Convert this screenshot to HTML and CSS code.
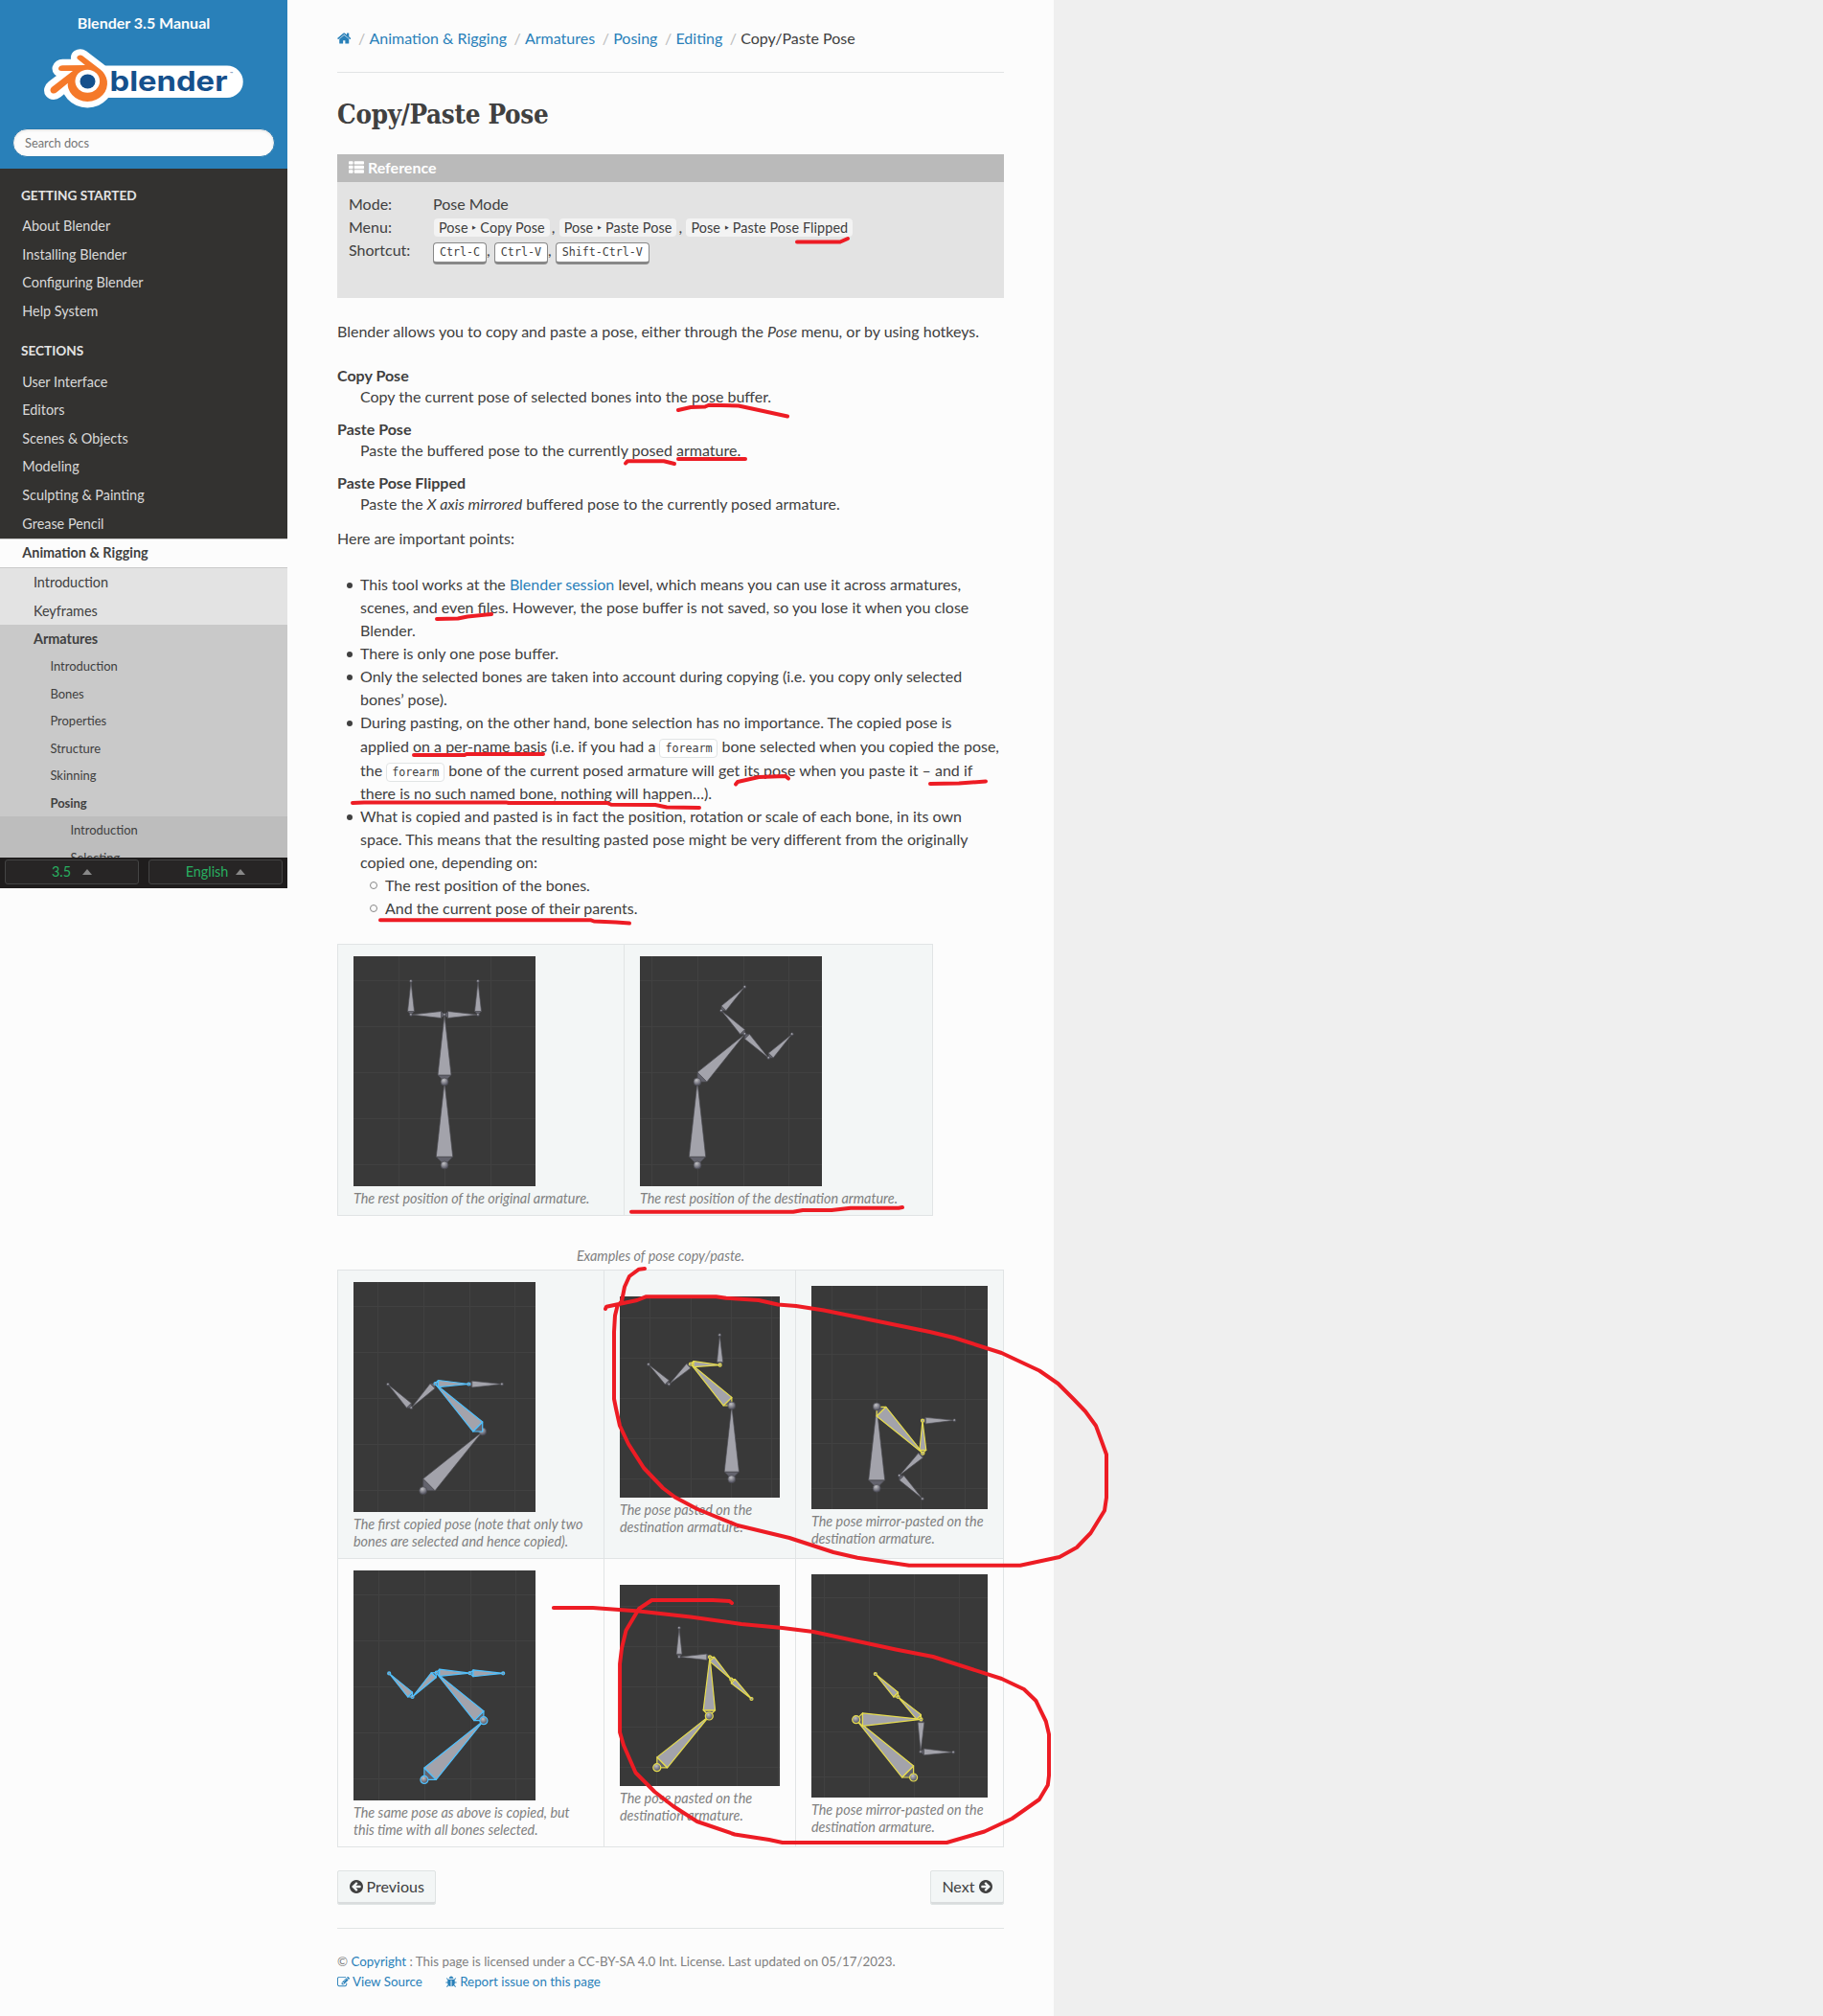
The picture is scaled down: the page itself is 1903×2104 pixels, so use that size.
FILE: index.html
```html
<!DOCTYPE html>
<html lang="en">
<head>
<meta charset="utf-8">
<title>Copy/Paste Pose — Blender Manual</title>
<link rel="stylesheet" href="styles.css">
</head>
<body>
<svg class="defs" width="0" height="0" aria-hidden="true">
  <defs>
    <!-- unit bone: head at the origin, tip at 1,0 -->
    <g id="bone">
      <path class="bone-base" d="M0 0L.1-.1V.1Z"/>
      <path class="bone-body" d="M.1-.1L1 0L.1.1Z"/>
    </g>
    <radialGradient id="ball" cx=".4" cy=".3" r=".7"><stop offset="0" stop-color="#c0c0c4"/><stop offset="1" stop-color="#4e4e5c"/></radialGradient>
    <circle id="joint" class="joint" r="4"/>
    <circle id="dot" class="joint" r="1.500"/>
    <symbol id="i-home" viewBox="64 0 1664 1792"><path d="M1472 992v480q0 26-19 45t-45 19h-384v-384h-256v384h-384q-26 0-45-19t-19-45v-480q0-1 .5-3t.5-3l575-474 575 474q1 2 1 6zm223-69l-62 74q-8 9-21 11h-3q-13 0-21-7l-692-577-692 577q-12 8-24 7-13-2-21-11l-62-74q-8-10-7-23.5t11-21.5l719-599q32-26 76-26t76 26l244 204v-195q0-14 9-23t23-9h192q14 0 23 9t9 23v408l219 182q10 8 11 21.5t-7 23.5z"/></symbol>
    <symbol id="i-list" viewBox="0 0 1792 1792"><path d="M512 1248v192q0 40-28 68t-68 28h-320q-40 0-68-28t-28-68v-192q0-40 28-68t68-28h320q40 0 68 28t28 68zm0-512v192q0 40-28 68t-68 28h-320q-40 0-68-28t-28-68v-192q0-40 28-68t68-28h320q40 0 68 28t28 68zm1280 512v192q0 40-28 68t-68 28h-960q-40 0-68-28t-28-68v-192q0-40 28-68t68-28h960q40 0 68 28t28 68zm-1280-1024v192q0 40-28 68t-68 28h-320q-40 0-68-28t-28-68v-192q0-40 28-68t68-28h320q40 0 68 28t28 68zm1280 512v192q0 40-28 68t-68 28h-960q-40 0-68-28t-28-68v-192q0-40 28-68t68-28h960q40 0 68 28t28 68zm0-512v192q0 40-28 68t-68 28h-960q-40 0-68-28t-28-68v-192q0-40 28-68t68-28h960q40 0 68 28t28 68z"/></symbol>
    <symbol id="i-arrow" viewBox="128 128 1536 1536"><path d="M1408 960v-128q0-26-19-45t-45-19h-502l189-189q19-19 19-45t-19-45l-91-91q-18-18-45-18t-45 18l-362 362-91 91q-18 18-18 45t18 45l91 91 362 362q18 18 45 18t45-18l91-91q18-18 18-45t-18-45l-189-189h502q26 0 45-19t19-45zm256-64q0 209-103 385.5t-279.5 279.5-385.5 103-385.5-103-279.5-279.5-103-385.5 103-385.5 279.5-279.5 385.5-103 385.5 103 279.5 279.5 103 385.5z"/></symbol>
    <symbol id="i-edit" viewBox="0 0 1792 1792"><path d="M888 1184l116-116-152-152-116 116v56h96v96h56zm440-720q-16-16-33 1l-350 350q-17 17-1 33t33-1l350-350q17-17 1-33zm80 594v190q0 119-84.5 203.5t-203.5 84.5h-832q-119 0-203.5-84.5t-84.5-203.5v-832q0-119 84.5-203.5t203.5-84.5h832q63 0 117 25 15 7 18 23 3 17-9 29l-49 49q-14 14-32 8-23-6-45-6h-832q-66 0-113 47t-47 113v832q0 66 47 113t113 47h832q66 0 113-47t47-113v-126q0-13 9-22l64-64q15-15 35-7t20 29zm-96-738l288 288-672 672h-288v-288zm444 132l-92 92-288-288 92-92q28-28 68-28t68 28l152 152q28 28 28 68t-28 68z"/></symbol>
    <symbol id="i-bug" viewBox="96 0 1600 1792"><path d="M1696 960q0 26-19 45t-45 19h-224q0 171-67 290l208 209q19 19 19 45t-19 45q-18 19-45 19t-45-19l-198-197q-5 5-15 13t-42 28.500-65 36.500-82 29-97 13v-896h-128v896q-51 0-101.500-13.500t-87-33-66-39-43.500-32.500l-15-14-183 207q-20 21-48 21-24 0-43-16-19-18-20.500-44.500t15.500-46.500l202-227q-58-114-58-274h-224q-26 0-45-19t-19-45 19-45 45-19h224v-294l-173-173q-19-19-19-45t19-45 45-19 45 19l173 173h844l173-173q19-19 45-19t45 19 19 45-19 45l-173 173v294h224q26 0 45 19t19 45zm-480-576h-640q0-133 93.500-226.500t226.500-93.500 226.500 93.500 93.500 226.500z"/></symbol>
  </defs>
</svg>

<div class="page">
  <nav class="sidebar">
    <div class="brand">
      <a class="brand-title">Blender 3.5 Manual</a>
      <svg class="logo" viewBox="46 51 209 62" width="209" height="62">
        <g fill="#fff" stroke="#fff" stroke-linejoin="round">
          <path stroke="none" d="M95 68.500H237a16.700 16.700 0 0 1 0 33.500H95Z"/>
          <path stroke-width="5.200" transform="translate(52.500 52) scale(2.480)" d="M7.350 14.831c.006.314.106.922.256 1.398a7.372 7.372 0 0 0 1.593 2.757 8.227 8.227 0 0 0 2.787 2.001 8.947 8.947 0 0 0 3.660.760 8.964 8.964 0 0 0 3.657-.772 8.285 8.285 0 0 0 2.785-2.010 7.428 7.428 0 0 0 1.592-2.762 6.964 6.964 0 0 0 .250-3.074 7.123 7.123 0 0 0-1.016-2.779 7.764 7.764 0 0 0-1.852-2.043L13.566 2.550l-.020-.015c-.492-.378-1.319-.376-1.860.002-.547.382-.609 1.015-.123 1.415l3.126 2.544-9.530.010h-.013c-.788.001-1.545.518-1.695 1.172-.154.665.380 1.217 1.200 1.220l4.830-.010-8.620 6.619-.034.025c-.813.622-1.075 1.658-.563 2.313.520.667 1.625.668 2.447.004L7.414 14s-.069.520-.063.831z"/>
        </g>
        <path fill="#f5792a" transform="translate(52.500 52) scale(2.480)" d="M7.350 14.831c.006.314.106.922.256 1.398a7.372 7.372 0 0 0 1.593 2.757 8.227 8.227 0 0 0 2.787 2.001 8.947 8.947 0 0 0 3.660.760 8.964 8.964 0 0 0 3.657-.772 8.285 8.285 0 0 0 2.785-2.010 7.428 7.428 0 0 0 1.592-2.762 6.964 6.964 0 0 0 .250-3.074 7.123 7.123 0 0 0-1.016-2.779 7.764 7.764 0 0 0-1.852-2.043L13.566 2.550l-.020-.015c-.492-.378-1.319-.376-1.860.002-.547.382-.609 1.015-.123 1.415l3.126 2.544-9.530.010h-.013c-.788.001-1.545.518-1.695 1.172-.154.665.380 1.217 1.200 1.220l4.830-.010-8.620 6.619-.034.025c-.813.622-1.075 1.658-.563 2.313.520.667 1.625.668 2.447.004L7.414 14s-.069.520-.063.831z"/>
        <ellipse cx="91.300" cy="84.800" rx="12.800" ry="12" fill="#fff"/>
        <ellipse cx="91.500" cy="84.900" rx="8" ry="7.500" fill="#15508c"/>
        <text class="logo-word" x="114.500" y="95" textLength="123" lengthAdjust="spacingAndGlyphs">blender</text>
        <text class="logo-tm" x="240" y="79">™</text>
      </svg>
      <div class="search">Search docs</div>
    </div>
    <div class="menu">
      <p class="menu-caption">Getting Started</p>
      <ul>
        <li><a>About Blender</a></li>
        <li><a>Installing Blender</a></li>
        <li><a>Configuring Blender</a></li>
        <li><a>Help System</a></li>
      </ul>
      <p class="menu-caption second">Sections</p>
      <ul>
        <li><a>User Interface</a></li>
        <li><a>Editors</a></li>
        <li><a>Scenes &amp; Objects</a></li>
        <li><a>Modeling</a></li>
        <li><a>Sculpting &amp; Painting</a></li>
        <li><a>Grease Pencil</a></li>
        <li class="current"><a>Animation &amp; Rigging</a>
          <ul class="l2">
            <li><a>Introduction</a></li>
            <li><a>Keyframes</a></li>
            <li class="open"><a>Armatures</a>
              <ul class="l3">
                <li><a>Introduction</a></li>
                <li><a>Bones</a></li>
                <li><a>Properties</a></li>
                <li><a>Structure</a></li>
                <li><a>Skinning</a></li>
                <li class="open"><a>Posing</a>
                  <ul class="l4">
                    <li><a>Introduction</a></li>
                    <li><a>Selecting</a></li>
                  </ul>
                </li>
              </ul>
            </li>
          </ul>
        </li>
      </ul>
    </div>
    <div class="versions">
      <div class="version-btn">3.5<span class="caret"></span></div>
      <div class="version-btn version-lang">English<span class="caret"></span></div>
    </div>
  </nav>

  <main class="content">
    <div class="crumbs">
      <a><svg class="icon home"><use href="#i-home"/></svg></a><i>/</i><a>Animation &amp; Rigging</a><i>/</i><a>Armatures</a><i>/</i><a>Posing</a><i>/</i><a>Editing</a><i>/</i><span>Copy/Paste Pose</span>
    </div>
    <hr>
    <h1>Copy/Paste Pose</h1>

    <section class="ref">
      <p class="ref-title"><svg class="icon"><use href="#i-list"/></svg> Reference</p>
      <dl class="ref-body">
        <dt>Mode:</dt><dd>Pose Mode</dd>
        <dt>Menu:</dt><dd><span class="menusel">Pose ‣ Copy Pose</span>,<span class="menusel">Pose ‣ Paste Pose</span>,<span class="menusel">Pose ‣ Paste Pose Flipped</span></dd>
        <dt>Shortcut:</dt><dd><kbd>Ctrl-C</kbd>, <kbd>Ctrl-V</kbd>, <kbd>Shift-Ctrl-V</kbd></dd>
      </dl>
    </section>

    <p class="intro">Blender allows you to copy and paste a pose, either through the <em>Pose</em> menu, or by using hotkeys.</p>

    <dl class="terms">
      <dt>Copy Pose</dt><dd>Copy the current pose of selected bones into the pose buffer.</dd>
      <dt>Paste Pose</dt><dd>Paste the buffered pose to the currently posed armature.</dd>
      <dt>Paste Pose Flipped</dt><dd>Paste the <em>X axis mirrored</em> buffered pose to the currently posed armature.</dd>
    </dl>

    <p class="points-lead">Here are important points:</p>
    <ul class="points">
      <li>This tool works at the <a>Blender session</a> level, which means you can use it across armatures,<br>scenes, and even files. However, the pose buffer is not saved, so you lose it when you close<br>Blender.</li>
      <li>There is only one pose buffer.</li>
      <li>Only the selected bones are taken into account during copying (i.e. you copy only selected<br>bones’ pose).</li>
      <li>During pasting, on the other hand, bone selection has no importance. The copied pose is
        <div class="code-line">applied on a per-name basis (i.e. if you had a <code>forearm</code> bone selected when you copied the pose,</div>
        <div class="code-line">the <code>forearm</code> bone of the current posed armature will get its pose when you paste it – and if</div>
        there is no such named bone, nothing will happen…).</li>
      <li>What is copied and pasted is in fact the position, rotation or scale of each bone, in its own<br>space. This means that the resulting pasted pose might be very different from the originally<br>copied one, depending on:
        <ul>
          <li>The rest position of the bones.</li>
          <li>And the current pose of their parents.</li>
        </ul>
      </li>
    </ul>

    <table class="figs figs-rest">
      <tr>
        <td><figure>
          <svg width="190" height="240">
            <path class="grid" d="M47.500 0V240M95.500 0V240M143.500 0V240M0 25.500H190M0 73.500H190M0 121.500H190M0 169.500H190M0 217.500H190"/>
            <use href="#bone" transform="matrix(0 -87 87 0 95 218)"/><use href="#bone" transform="matrix(0 -70 70 0 95 131)"/>
            <use href="#bone" transform="matrix(-35 0 0 -35 95 61)"/><use href="#bone" transform="matrix(35 0 0 35 95 61)"/>
            <use href="#bone" transform="matrix(0 -35 35 0 60 61)"/><use href="#bone" transform="matrix(0 -35 35 0 130 61)"/>
            <use href="#joint" x="95" y="218"/><use href="#joint" x="95" y="131"/><use href="#dot" x="95" y="61"/><use href="#dot" x="60" y="61"/><use href="#dot" x="130" y="61"/><use href="#dot" x="60" y="26"/><use href="#dot" x="130" y="26"/>
          </svg>
          <figcaption>The rest position of the original armature.</figcaption>
        </figure></td>
        <td><figure>
          <svg width="190" height="240">
            <path class="grid" d="M12.500 0V240M60.500 0V240M108.500 0V240M155.500 0V240M0 25.500H190M0 73.500H190M0 121.500H190M0 169.500H190M0 217.500H190"/>
            <use href="#bone" transform="matrix(0 -87 87 0 60 218)"/><use href="#bone" transform="matrix(49.400 -49.500 49.500 49.400 60 131)"/>
            <use href="#bone" transform="matrix(-24.400 -24.600 24.600 -24.400 109.400 81.300)"/><use href="#bone" transform="matrix(25 25 -25 25 109.400 81.300)"/>
            <use href="#bone" transform="matrix(24.400 -24.700 24.700 24.400 85 56.700)"/><use href="#bone" transform="matrix(24.500 -24.700 24.700 24.500 134.300 106)"/>
            <use href="#joint" x="60" y="218"/><use href="#joint" x="60" y="131"/><use href="#dot" x="109.400" y="81"/><use href="#dot" x="85" y="56.700"/><use href="#dot" x="134.300" y="106"/><use href="#dot" x="109.400" y="32"/><use href="#dot" x="158.800" y="81.300"/>
          </svg>
          <figcaption>The rest position of the destination armature.</figcaption>
        </figure></td>
      </tr>
    </table>

    <table class="figs figs-examples">
      <caption>Examples of pose copy/paste.</caption>
      <tr class="odd">
        <td><figure>
          <svg width="190" height="240">
            <path class="grid" d="M25.500 0V240M73.500 0V240M121.500 0V240M168.500 0V240M0 25.500H190M0 73.500H190M0 121.500H190M0 169.500H190M0 217.500H190"/>
            <use href="#bone" transform="matrix(62 -61.700 61.700 62 72.700 217.700)"/>
            <use href="#bone" transform="matrix(34.700 0 0 34.700 120.300 106.600)"/><use href="#bone" transform="matrix(-24.700 25.300 -25.300 -24.700 85 106)"/><use href="#bone" transform="matrix(-24.300 -24.600 24.600 -24.300 60.300 131.300)"/>
            <use href="#joint" x="72.700" y="217.700"/><use href="#joint" x="134.700" y="156"/><use href="#dot" x="36" y="106.700"/><use href="#dot" x="60.300" y="131.300"/><use href="#dot" x="155" y="106.600"/>
            <g class="sel"><use href="#bone" transform="matrix(-49.700 -50 50 -49.700 134.700 156)"/><use href="#bone" transform="matrix(35.300 .5 -.5 35.300 85 106)"/><use href="#dot" x="85.500" y="106"/><use href="#dot" x="120.300" y="106.500"/></g>
          </svg>
          <figcaption>The first copied pose (note that only two<br>bones are selected and hence copied).</figcaption>
        </figure></td>
        <td><figure>
          <svg width="167" height="210">
            <path class="grid" d="M31.500 0V210M74.500 0V210M116.500 0V210M158.500 0V210M0 22.500H167M0 64.500H167M0 106.500H167M0 148.500H167M0 190.500H167"/>
            <use href="#bone" transform="matrix(0 -76.700 76.700 0 116.800 190.700)"/>
            <use href="#bone" transform="matrix(-.3 -31.400 31.400 -.3 104.600 71.700)"/><use href="#bone" transform="matrix(-22.600 21.200 -21.200 -22.600 74 70.500)"/><use href="#bone" transform="matrix(-21.400 -20.700 20.700 -21.400 51.400 91.700)"/>
            <g class="pasted"><use href="#bone" transform="matrix(-42.800 -43.700 43.700 -42.800 116.800 114)"/><use href="#bone" transform="matrix(30.600 1.200 -1.200 30.600 74 70.500)"/><use href="#dot" x="74" y="70.500"/><use href="#dot" x="104.600" y="71.700"/></g>
            <use href="#joint" x="116.800" y="190.700"/><use href="#joint" x="116.800" y="114"/><use href="#dot" x="104.300" y="40.300"/><use href="#dot" x="51.400" y="91.700"/><use href="#dot" x="30" y="71"/>
          </svg>
          <figcaption>The pose pasted on the<br>destination armature.</figcaption>
        </figure></td>
        <td><figure>
          <svg width="184" height="233">
            <path class="grid" d="M21.500 0V233M68.500 0V233M114.500 0V233M160.500 0V233M0 24.500H184M0 71.500H184M0 118.500H184M0 164.500H184M0 211.500H184"/>
            <use href="#bone" transform="matrix(0 -85 85 0 68.200 211.300)"/>
            <use href="#bone" transform="matrix(33.300 -.4 .4 33.300 116 140.700)"/><use href="#bone" transform="matrix(-24.600 23.300 -23.300 -24.600 116.400 174.700)"/><use href="#bone" transform="matrix(24.200 24.300 -24.300 24.200 91.800 198)"/>
            <g class="pasted dark"><use href="#bone" transform="matrix(48.200 48.400 -48.400 48.200 68.200 126.300)"/><use href="#bone" transform="matrix(-.4 -34 34 -.4 116.400 174.700)"/><use href="#dot" x="116.400" y="174.700"/><use href="#dot" x="116" y="140.700"/></g>
            <use href="#joint" x="68.200" y="211.300"/><use href="#joint" x="68.200" y="126"/><use href="#dot" x="149.300" y="140.300"/><use href="#dot" x="91.800" y="198"/><use href="#dot" x="116" y="222.300"/>
          </svg>
          <figcaption>The pose mirror-pasted on the<br>destination armature.</figcaption>
        </figure></td>
      </tr>
      <tr>
        <td><figure>
          <svg width="190" height="240">
            <path class="grid" d="M26.500 0V240M74.500 0V240M122.500 0V240M169.500 0V240M0 25.500H190M0 73.500H190M0 121.500H190M0 169.500H190M0 217.500H190"/>
            <g class="sel" transform="translate(1.200 .7)"><use href="#bone" transform="matrix(62 -61.700 61.700 62 72.700 217.700)"/><use href="#bone" transform="matrix(-49.700 -50 50 -49.700 134.700 156)"/><use href="#bone" transform="matrix(35.300 .5 -.5 35.300 85 106)"/><use href="#bone" transform="matrix(34.700 0 0 34.700 120.300 106.600)"/><use href="#bone" transform="matrix(-24.700 25.300 -25.300 -24.700 85 106)"/><use href="#bone" transform="matrix(-24.300 -24.600 24.600 -24.300 60.300 131.300)"/>
            <use href="#joint" x="72.700" y="217.700"/><use href="#joint" x="134.700" y="156"/><use href="#dot" x="85.500" y="106"/><use href="#dot" x="120.300" y="106.500"/><use href="#dot" x="36" y="106.700"/><use href="#dot" x="60.300" y="131.300"/><use href="#dot" x="155" y="106.600"/></g>
          </svg>
          <figcaption>The same pose as above is copied, but<br>this time with all bones selected.</figcaption>
        </figure></td>
        <td><figure>
          <svg width="167" height="210">
            <path class="grid" d="M38.500 0V210M81.500 0V210M122.500 0V210M165.500 0V210M0 22.500H167M0 64.500H167M0 106.500H167M0 148.500H167M0 190.500H167"/>
            <use href="#bone" transform="matrix(-32 0 0 -32 94 75.300)"/><use href="#bone" transform="matrix(0 -30.300 30.300 0 62 75.300)"/><use href="#dot" x="62" y="75.300"/><use href="#dot" x="62" y="45"/>
            <g class="pasted"><use href="#bone" transform="matrix(54.500 -53.700 53.700 54.500 38.800 190.700)"/><use href="#bone" transform="matrix(.7 -61.700 61.700 .7 93.300 137)"/><use href="#bone" transform="matrix(22.300 23.400 -23.400 22.300 94 75.300)"/><use href="#bone" transform="matrix(21.200 20.300 -20.300 21.200 116.300 98.700)"/>
            <use href="#joint" x="38.800" y="190.700"/><use href="#joint" x="93.300" y="137"/><use href="#dot" x="94" y="75.300"/><use href="#dot" x="116.300" y="98.700"/><use href="#dot" x="137.500" y="119"/></g>
          </svg>
          <figcaption>The pose pasted on the<br>destination armature.</figcaption>
        </figure></td>
        <td><figure>
          <svg width="184" height="233">
            <path class="grid" d="M13.500 0V233M60.500 0V233M107.500 0V233M154.500 0V233M0 24.500H184M0 71.500H184M0 118.500H184M0 164.500H184M0 211.500H184"/>
            <use href="#bone" transform="matrix(-.4 34 -34 -.4 114.500 151.300)"/><use href="#bone" transform="matrix(34.100 .4 -.4 34.100 114.100 185.300)"/><use href="#dot" x="114.100" y="185.300"/><use href="#dot" x="148.200" y="185.700"/>
            <g class="pasted"><use href="#bone" transform="matrix(-59.900 -60.300 60.300 -59.900 106.600 212)"/><use href="#bone" transform="matrix(67.800 -.4 .4 67.800 46.700 151.700)"/><use href="#bone" transform="matrix(-24 -23.300 23.300 -24 114.500 151.300)"/><use href="#bone" transform="matrix(-23.700 -24 24 -23.700 90.500 128)"/>
            <use href="#joint" x="106.600" y="212"/><use href="#joint" x="46.700" y="151.700"/><use href="#dot" x="114.500" y="151.300"/><use href="#dot" x="90.500" y="128"/><use href="#dot" x="66.800" y="104"/></g>
          </svg>
          <figcaption>The pose mirror-pasted on the<br>destination armature.</figcaption>
        </figure></td>
      </tr>
    </table>

    <div class="pager">
      <a class="btn"><svg class="icon"><use href="#i-arrow"/></svg> Previous</a>
      <a class="btn">Next <svg class="icon flip"><use href="#i-arrow"/></svg></a>
    </div>
    <hr class="foot-rule">
    <footer>
      <p>© <a>Copyright</a> : This page is licensed under a CC-BY-SA 4.0 Int. License. Last updated on 05/17/2023.</p>
      <p class="foot-links"><a><svg class="icon"><use href="#i-edit"/></svg> View Source</a><a><svg class="icon bug"><use href="#i-bug"/></svg> Report issue on this page</a></p>
    </footer>
  </main>
</div>

<!-- hand-drawn pen marks over the page -->
<svg class="marks" viewBox="0 0 1903 2104" width="1903" height="2104">
  <path d="M832 252.500H877L885 249"/>
  <path d="M708 428L721 425L736 424.500L740 422.700L771 423.500L792 428L822 434.500"/>
  <path d="M653 483.500L655 481.300H693L704 484"/>
  <path d="M708 479H778"/>
  <path d="M456 646L478 645.500L488 643.500L513 641"/>
  <path d="M432 788H485L487 787H567"/>
  <path d="M768 818.500L770 816L792 811L820 810L823 812.500"/>
  <path d="M971 818L1001 817.500L1029 815.500"/>
  <path d="M368 838L380 837.400H528L531 838H634L638 839.800L684 840L696 842.500L730 843"/>
  <path d="M397 960.300H617L620 961.500L643 962.400L657 963.500"/>
  <path d="M659 1264.700H828L838 1263H868L888 1260.700H938L942 1260"/>
  <path d="M673 1324L667 1324.700L657 1332L652 1343L649 1358L644.500 1363L642 1373L641 1390V1460L643 1470L647 1488L656 1507L672 1532L692 1553L704.500 1562.500L728 1575L770 1592L824 1605L870 1620L895 1625.700L949 1633.700H1065L1106 1625L1124 1615L1138.500 1600L1153 1576.500L1155 1563V1518L1149 1501.500L1144 1488L1133 1473L1120.500 1460L1104.500 1444L1085 1430.500L1045.500 1412L995.500 1396L970.500 1390L924 1380.500L860 1367.500L831 1363L812 1361.500L792 1357L758 1354.700L747.500 1353.300H674L665 1357L633 1363.700L632 1366"/>
  <path transform="matrix(.995 0 0 1 2.800 0)" d="M765 1673L762.500 1671L745 1670H681L667.500 1679L654 1701.500L649.500 1720L647.500 1736.500V1808L651.500 1821.500L664 1850L684 1870L703.500 1885L728.500 1901L768 1914.500L804 1920L818 1923H990.500L1030 1911.500L1059 1898L1087.500 1878L1096.500 1863L1097.700 1853V1810L1094.500 1796.500L1084 1775L1071.500 1763L1048 1752L976 1729L937 1721.500L850.500 1703L818 1699L775 1695L721.500 1687.500L667.500 1681.500L619 1678H578"/>
</svg>
</body>
</html>
```

FILE: styles.css
```css
* { box-sizing: border-box; }
body {
  margin: 0;
  position: relative;
  height: 2104px;
  overflow: hidden;
  background: #efefef;
  color: #404040;
  font: 16px/24px Lato, sans-serif;
}
p, ul, dl, dd, figure { margin: 0; padding: 0; }
a { color: #2980b9; text-decoration: none; }
.defs { position: absolute; }
.page { display: flex; align-items: flex-start; width: 1100px; height: 2104px; background: #fcfcfc; }
.icon { width: 16px; height: 16px; fill: currentColor; vertical-align: -2px; }

/* sidebar */
.sidebar { display: flex; flex-direction: column; width: 300px; height: 927px; background: #333230; overflow: hidden; }
.brand { flex: none; height: 176px; padding: 12px 13px 0; background: #2980b9; display: flex; flex-direction: column; align-items: center; }
.brand-title { color: #fcfcfc; font-weight: 700; }
.logo { display: block; margin: 15px 0 21px; flex: none; }
.logo-word { font: 700 28.500px Inter, sans-serif; fill: #15508c; }
.logo-tm { font: 5px Inter, sans-serif; fill: #15508c; }
.search { width: 274px; height: 30px; padding: 0 12px; border: 1px solid #2678ae; border-radius: 50px; background: #fcfcfc; box-shadow: inset 0 1px 3px #ddd; color: #757575; font-size: 12.800px; line-height: 28px; }
.menu { flex: 1; min-height: 0; overflow: hidden; }
.menu ul { list-style: none; font-size: 14.400px; }
.menu-caption { margin-top: 12px; height: 33.300px; line-height: 32px; padding: 0 22px; font-size: 13.600px; font-weight: 700; text-transform: uppercase; color: #e4e4e4; }
.menu-caption.second { margin-top: 10.700px; }
.menu a { display: block; line-height: 18px; padding: .4045em 1.618em; color: #d9d9d9; }
.menu .current > a { border: solid #c9c9c9; border-width: 1px 0; background: #fcfcfc; color: #404040; font-weight: 700; }
.menu .l2 { background: #e3e3e3; }
.menu .l2 a { color: #404040; padding-left: 2.427em; }
.menu .l2 .open { background: #c9c9c9; }
.menu .open > a { font-weight: 700; }
.menu .l2 > .open > a { padding-bottom: 5px; }
.menu .l3 { font-size: 12.960px; }
.menu .l3 a { padding-left: 4.045em; }
.menu .l3 .l4 { font-size: 12.960px; background: #bdbdbd; }
.menu .l3 .l4 a { padding-left: 5.663em; }
.versions { flex: none; height: 32px; padding: 2px 5px 0; display: flex; gap: 10px; background: #1f1d1d; }
.version-btn { width: 140px; height: 26px; border: 1px solid #444; border-radius: 3px; background: #272525; color: #27ae60; font-size: 14.400px; line-height: 24px; display: flex; justify-content: center; align-items: center; gap: 12px; }
.version-lang { gap: 8px; }
.caret { border: 5px solid transparent; border-top: 0; border-bottom: 6px solid #888; }

/* content */
.content { width: 800px; padding: 28px 52px 0; }
.crumbs { display: flex; height: 24px; white-space: pre; }
.crumbs i { font-style: normal; color: #bbb; width: 19px; padding-left: 7.500px; }
.crumbs .home { width: 14.500px; height: 16px; display: inline-block; }
hr { height: 1px; margin: 23px 0 0; border: 0; background: #e1e4e5; }
h1 { margin: 24px 0 0; height: 38px; font: 700 27.500px/38px "Roboto Slab", "DejaVu Serif Condensed", "DejaVu Serif", serif; letter-spacing: -.28px; white-space: nowrap; }
.ref { margin-top: 23px; height: 150px; background: #e3e3e3; }
.ref-title { height: 29px; padding: 0 12px; background: #bababa; color: #fff; font-weight: 700; line-height: 28px; }
.ref-body { display: grid; grid-template-columns: 88px 1fr; grid-auto-rows: 24px; padding: 11px 12px 0; }
.menusel { display: inline-block; height: 19px; line-height: 19px; padding: 0 5px; margin: 0 2px 0 4.300px; font-size: 14.400px; letter-spacing: .1px; background: #f3f3f3; border-radius: 4px; }
.menusel:first-child { margin-left: 1px; }
kbd { display: inline-block; height: 23px; padding: 0 6px; border: 1px solid #888; border-bottom-width: 3px; border-radius: 4px; background: #fff; font: 11.700px/19px "DejaVu Sans Mono", monospace; letter-spacing: -.02px; }
.intro { margin-top: 22.500px; }
.terms { margin-top: 22.500px; }
.terms dt { font-weight: 700; height: 22px; }
.terms dd { padding-left: 24px; height: 24px; margin-bottom: 10px; }
.points-lead { margin-top: 12px; }
.points { margin-top: 24px; padding-left: 24px; }
.points, .points ul { list-style: none; }
.points ul { padding-left: 24px; }
.points li::before { content: ""; display: inline-block; width: 6px; height: 6px; margin: 0 8px 0 -14px; border-radius: 50%; background: #404040; vertical-align: 2px; }
.points ul li::before { border: 1px solid #888; background: none; }
.code-line { height: 25px; line-height: 25px; white-space: nowrap; }
code { display: inline-block; height: 20px; padding: 0 5px; border: 1px solid #e1e4e5; border-radius: 4px; background: #fff; font: 11.700px/18px "DejaVu Sans Mono", monospace; letter-spacing: -.04px; }

/* figure tables */
.figs { border-collapse: collapse; table-layout: fixed; }
.figs td { border: 1px solid #e1e4e5; padding: 12px 16px 0; vertical-align: middle; }
.figs-rest { width: 622px; height: 284px; margin-top: 25px; background: #f3f6f6; }
.figs-rest td:first-child { width: 299px; }
.figs-examples { width: 696px; margin-top: 33px; }
.figs-examples caption { height: 23px; line-height: 18px; font-size: 14.400px; font-style: italic; color: #808080; padding-right: 21px; }
.figs-examples tr { height: 301px; }
.figs-examples .odd { background: #f3f6f6; }
.figs-examples td:nth-child(1) { width: 278px; }
.figs-examples td:nth-child(2) { width: 200px; }
figure svg { display: block; background: #393939; --edge: #4a4a50; --edge-width: .7; }
figcaption { margin-top: 4px; padding-bottom: 8px; line-height: 18px; font-size: 14.400px; font-style: italic; color: #808080; white-space: nowrap; }
.grid { stroke: #414141; fill: none; }
.bone-body { fill: #a3a3ab; }
.bone-base { fill: #63636d; }
.bone-body, .bone-base, .joint { stroke: var(--edge); stroke-width: var(--edge-width); stroke-linejoin: round; vector-effect: non-scaling-stroke; }
.joint { fill: url(#ball); }
.sel { --edge: #4fc1ff; --edge-width: 1.2; }
.pasted { --edge: #e6dc4e; --edge-width: 1.2; }

/* pager and footer */
.pager { display: flex; justify-content: space-between; margin-top: 24px; }
.btn { height: 36px; padding: 0 11.500px; line-height: 32px; border: 1px solid #dfe3e3; border-radius: 2px; background: #f3f6f6; box-shadow: inset 0 -2px 0 #d9dcdd; color: #404040; }
.btn .icon { width: 14px; height: 14px; vertical-align: -1px; }
.flip { transform: scaleX(-1); }
.foot-rule { margin-top: 24px; }
footer { margin-top: 24px; font-size: 13.330px; line-height: 21px; color: #808080; }
.foot-links { display: flex; gap: 24px; }
.foot-links .icon { width: 13px; height: 13px; }
.foot-links .bug { width: 12px; }

.marks { position: absolute; left: 0; top: 0; fill: none; stroke: #ed1c24; stroke-width: 4; stroke-linejoin: round; stroke-linecap: round; pointer-events: none; }
```
